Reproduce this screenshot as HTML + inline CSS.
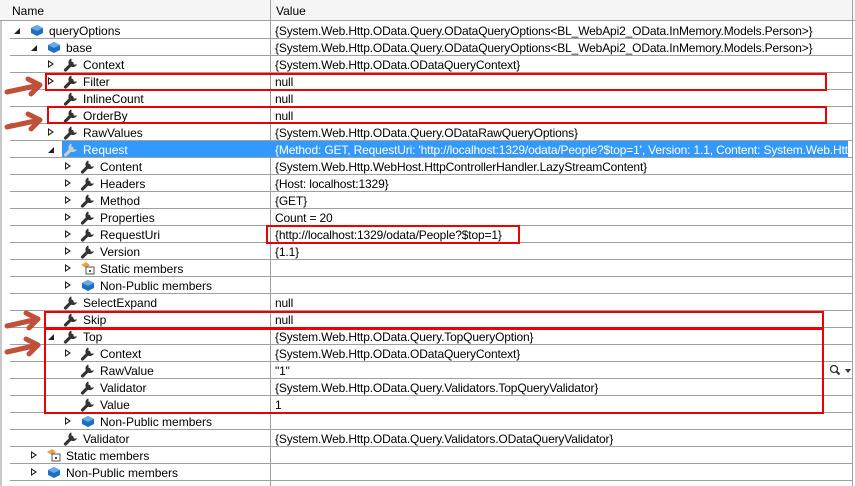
<!DOCTYPE html>
<html><head><meta charset="utf-8"><style>
body{margin:0;width:855px;height:486px;overflow:hidden;background:#fff;font-family:"Liberation Sans",sans-serif;font-size:12px;color:#000;position:relative}
.hdr{position:absolute;left:0;top:0;width:855px;height:21px;background:#f5f5f5;border-bottom:1px solid #a0a0a0;box-sizing:border-box}
.hdr span{position:absolute;top:4px}
.r{position:absolute;left:0;width:852px;height:17px}
.r::after{content:"";position:absolute;left:10px;right:0;bottom:0;height:1px;background:#a0a0a0}
.r .n,.r .v{position:absolute;top:2px;white-space:nowrap}
.r .v{left:275px;width:573px;overflow:hidden;letter-spacing:-0.15px}
.sel{position:absolute;left:62px;top:0;width:786px;height:16px;background:#3399ff}
.ex{position:absolute;top:4px;width:0;height:0}
.c{border-left:6px solid #222;border-top:4px solid transparent;border-bottom:4px solid transparent}
.c::after{content:"";position:absolute;left:-5px;top:-2px;border-left:3px solid #fff;border-top:2px solid transparent;border-bottom:2px solid transparent}
.o{border-right:6px solid #222;border-top:6px solid transparent;top:6px}
.ic{position:absolute;top:0px}
</style></head><body>
<div style="position:absolute;left:0;top:0;width:2px;height:486px;background:#c8c8c8"></div>
<div class="hdr"><span style="left:12px">Name</span><span style="left:276px">Value</span></div>
<div style="position:absolute;left:270px;top:0;width:1px;height:486px;background:#a0a0a0"></div>
<div style="position:absolute;left:852px;top:0;width:1px;height:486px;background:#a0a0a0"></div>
<svg width="0" height="0" style="position:absolute"><defs>
<g id="w"><path d="M2.5 14 L9 7.5" stroke="#333" stroke-width="3.2" stroke-linecap="round"/><path d="M8 2.5 A4.5 4.5 0 1 0 14 8.5 L11 8.5 L8.5 6 L8.5 3 Z" fill="#333"/></g>
<g id="b"><path d="M2 6 L8 3 L14 6 L14 11 L8 14 L2 11Z" fill="#1e6fc0"/><path d="M2 6 L8 3 L14 6 L8 9Z" fill="#6aa9e8"/></g>
<g id="s"><path d="M1 5 L6 2 L10 5 L6 8Z" fill="#e8a33c"/><rect x="6" y="7" width="8" height="7" fill="#fff" stroke="#555"/><rect x="9" y="10" width="2" height="2" fill="#555"/></g>
</defs></svg>
<div id="rows"></div>
<script>
var R=[
[0,'o','b','queryOptions','{System.Web.Http.OData.Query.ODataQueryOptions&lt;BL_WebApi2_OData.InMemory.Models.Person&gt;}'],
[1,'o','b','base','{System.Web.Http.OData.Query.ODataQueryOptions&lt;BL_WebApi2_OData.InMemory.Models.Person&gt;}'],
[2,'c','w','Context','{System.Web.Http.OData.ODataQueryContext}'],
[2,'c','w','Filter','null'],
[2,'','w','InlineCount','null'],
[2,'','w','OrderBy','null'],
[2,'c','w','RawValues','{System.Web.Http.OData.Query.ODataRawQueryOptions}'],
[2,'o','w','Request',"{Method: GET, RequestUri: 'http://localhost:1329/odata/People?$top=1', Version: 1.1, Content: System.Web.Http.WebHost.HttpControllerHandler"],
[3,'c','w','Content','{System.Web.Http.WebHost.HttpControllerHandler.LazyStreamContent}'],
[3,'c','w','Headers','{Host: localhost:1329}'],
[3,'c','w','Method','{GET}'],
[3,'c','w','Properties','Count = 20'],
[3,'c','w','RequestUri','{http://localhost:1329/odata/People?$top=1}'],
[3,'c','w','Version','{1.1}'],
[3,'c','s','Static members',''],
[3,'c','b','Non-Public members',''],
[2,'','w','SelectExpand','null'],
[2,'','w','Skip','null'],
[2,'o','w','Top','{System.Web.Http.OData.Query.TopQueryOption}'],
[3,'c','w','Context','{System.Web.Http.OData.ODataQueryContext}'],
[3,'','w','RawValue','"1"'],
[3,'','w','Validator','{System.Web.Http.OData.Query.Validators.TopQueryValidator}'],
[3,'','w','Value','1'],
[3,'c','b','Non-Public members',''],
[2,'','w','Validator','{System.Web.Http.OData.Query.Validators.ODataQueryValidator}'],
[1,'c','s','Static members',''],
[1,'c','b','Non-Public members','']];
var h='';
R.forEach(function(r,i){
 var L=r[0],t=22+17*i,sel=(i==7);
 h+='<div class="r" style="top:'+t+'px">';
 if(sel)h+='<div class="sel"></div>';
 if(r[1]=='c')h+='<div class="ex c" style="left:'+(14+17*L)+'px"></div>';
 if(r[1]=='o')h+='<div class="ex o" style="left:'+(14+17*L)+'px"></div>';
 var ic=r[2];
 h+='<svg class="ic" width="16" height="16" style="left:'+(29+17*L)+'px"><use href="#'+ic+'"'+(sel?' style="filter:invert(1)"':'')+'/></svg>';
 h+='<span class="n" style="left:'+(49+17*L)+'px;'+(sel?'color:#fff':'')+'">'+r[3]+'</span>';
 h+='<span class="v" style="'+(sel?'color:#fff':'')+'">'+r[4]+'</span></div>';
});
document.getElementById('rows').innerHTML=h;
</script>
<svg style="position:absolute;left:829px;top:364px" width="12" height="12"><circle cx="5" cy="5" r="3.5" fill="none" stroke="#333" stroke-width="1.3"/><path d="M7.5 7.5 L10.5 10.5" stroke="#333" stroke-width="2"/></svg>
<div style="position:absolute;left:845px;top:369px;border-top:4px solid #333;border-left:3px solid transparent;border-right:3px solid transparent"></div>
<div style="position:absolute;left:45px;top:73px;width:782px;height:18px;border:2px solid #e00;box-sizing:border-box"></div>
<div style="position:absolute;left:47px;top:106px;width:780px;height:18px;border:2px solid #e00;box-sizing:border-box"></div>
<div style="position:absolute;left:266px;top:225px;width:254px;height:19px;border:2px solid #e00;box-sizing:border-box"></div>
<div style="position:absolute;left:44px;top:311px;width:780px;height:18px;border:2px solid #e00;box-sizing:border-box"></div>
<div style="position:absolute;left:44px;top:328px;width:780px;height:86px;border:2px solid #e00;box-sizing:border-box"></div>
<svg style="position:absolute;left:0;top:0" width="60" height="486">
<g stroke="#c0503a" stroke-width="5" stroke-linecap="round" stroke-linejoin="round" fill="none">
<path d="M7 92 L40 85 M28 79 L40 85 L31 94"/>
<path d="M7 127 L40 120 M28 114 L40 120 L31 129"/>
<path d="M7 326 L38 319 M26 313 L38 319 L29 328"/>
<path d="M7 352 L38 345 M26 339 L38 345 L29 354"/>
</g></svg>
</body></html>
